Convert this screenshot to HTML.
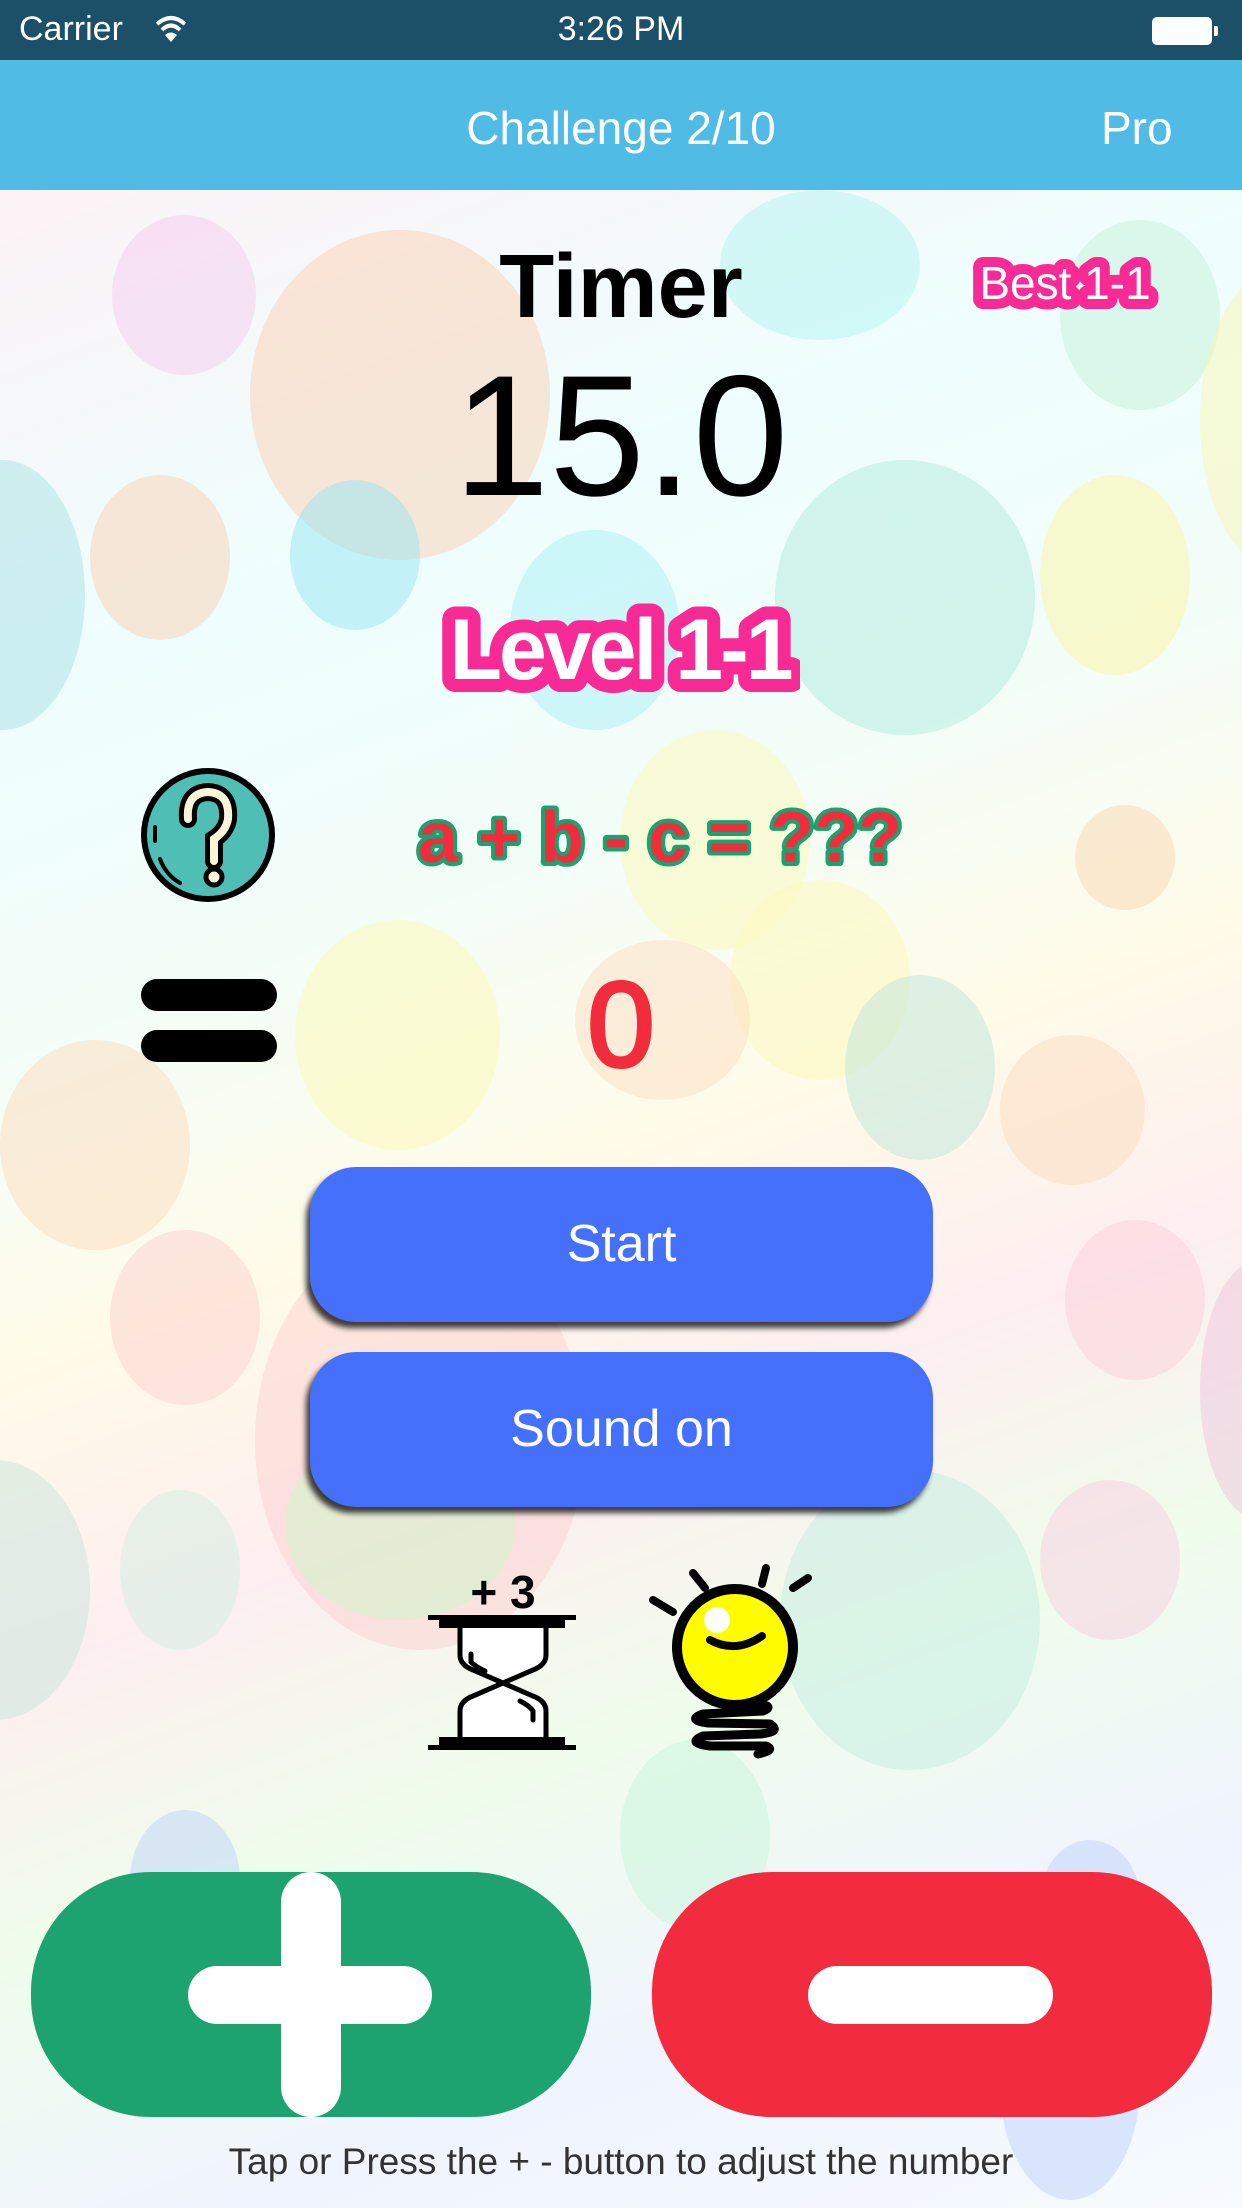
<!DOCTYPE html>
<html><head><meta charset="utf-8"><style>
*{margin:0;padding:0;box-sizing:border-box}
body{width:1242px;height:2208px;position:relative;overflow:hidden;font-family:"Liberation Sans",sans-serif;background:#f6fbfb}
.bg{position:absolute;left:0;top:190px;width:1242px;height:2018px;overflow:hidden;
background:linear-gradient(160deg,#fdf3f6 0%,#eefefe 20%,#f3fdf8 35%,#fffbe8 48%,#fdeef0 60%,#effdec 72%,#f0f4fe 85%,#f6fbff 100%)}
.c{position:absolute;border-radius:50%}
.abs{position:absolute}
.sb{position:absolute;left:0;top:0;width:1242px;height:60px;background:#1b5068;color:#fff;font-size:34px}
.nav{position:absolute;left:0;top:60px;width:1242px;height:130px;background:#50bbe5;color:#fff;font-size:46px}
.btn{position:absolute;left:310px;width:623px;height:155px;background:#4570fb;border-radius:46px;box-shadow:-4px 6px 6px rgba(0,0,0,.75);color:#fff;font-size:52px;text-align:center;line-height:155px}
</style></head><body>
<div class="bg">
<div class="c" style="left:112px;top:25px;width:144px;height:160px;background:rgba(245,200,240,.45)"></div>
<div class="c" style="left:250px;top:40px;width:300px;height:330px;background:rgba(250,205,170,.45)"></div>
<div class="c" style="left:720px;top:0px;width:200px;height:150px;background:rgba(170,245,240,.45)"></div>
<div class="c" style="left:1060px;top:30px;width:160px;height:190px;background:rgba(190,240,210,.45)"></div>
<div class="c" style="left:1200px;top:80px;width:160px;height:300px;background:rgba(250,245,180,.5)"></div>
<div class="c" style="left:-80px;top:270px;width:165px;height:270px;background:rgba(170,225,230,.5)"></div>
<div class="c" style="left:90px;top:285px;width:140px;height:165px;background:rgba(250,205,170,.45)"></div>
<div class="c" style="left:290px;top:290px;width:130px;height:150px;background:rgba(150,230,240,.5)"></div>
<div class="c" style="left:510px;top:340px;width:170px;height:200px;background:rgba(170,240,245,.5)"></div>
<div class="c" style="left:775px;top:270px;width:260px;height:275px;background:rgba(175,235,220,.5)"></div>
<div class="c" style="left:1040px;top:285px;width:150px;height:200px;background:rgba(250,245,170,.55)"></div>
<div class="c" style="left:620px;top:540px;width:190px;height:220px;background:rgba(252,250,190,.55)"></div>
<div class="c" style="left:1075px;top:615px;width:100px;height:105px;background:rgba(250,215,180,.5)"></div>
<div class="c" style="left:730px;top:690px;width:180px;height:200px;background:rgba(252,250,190,.55)"></div>
<div class="c" style="left:295px;top:730px;width:205px;height:230px;background:rgba(252,250,190,.6)"></div>
<div class="c" style="left:575px;top:750px;width:175px;height:160px;background:rgba(252,220,190,.45)"></div>
<div class="c" style="left:845px;top:785px;width:150px;height:185px;background:rgba(190,230,220,.5)"></div>
<div class="c" style="left:0px;top:850px;width:190px;height:210px;background:rgba(252,220,190,.5)"></div>
<div class="c" style="left:1000px;top:845px;width:145px;height:150px;background:rgba(252,220,190,.5)"></div>
<div class="c" style="left:110px;top:1040px;width:150px;height:175px;background:rgba(252,205,205,.45)"></div>
<div class="c" style="left:255px;top:1040px;width:330px;height:420px;background:rgba(252,200,200,.4)"></div>
<div class="c" style="left:1065px;top:1030px;width:140px;height:160px;background:rgba(252,205,215,.45)"></div>
<div class="c" style="left:1200px;top:1070px;width:120px;height:260px;background:rgba(240,190,220,.45)"></div>
<div class="c" style="left:-100px;top:1270px;width:190px;height:260px;background:rgba(200,230,220,.5)"></div>
<div class="c" style="left:120px;top:1300px;width:120px;height:160px;background:rgba(210,240,225,.5)"></div>
<div class="c" style="left:780px;top:1280px;width:260px;height:300px;background:rgba(190,235,225,.45)"></div>
<div class="c" style="left:1040px;top:1290px;width:140px;height:160px;background:rgba(250,205,225,.5)"></div>
<div class="c" style="left:285px;top:1240px;width:230px;height:190px;background:rgba(200,250,200,.45)"></div>
<div class="c" style="left:620px;top:1550px;width:150px;height:190px;background:rgba(200,245,220,.5)"></div>
<div class="c" style="left:130px;top:1620px;width:110px;height:140px;background:rgba(190,210,250,.5)"></div>
<div class="c" style="left:1040px;top:1650px;width:100px;height:120px;background:rgba(190,210,250,.5)"></div>
<div class="c" style="left:1000px;top:1780px;width:140px;height:230px;background:rgba(190,210,250,.5)"></div>
</div>

<div class="sb">
<div class="abs" style="left:19px;top:10px">Carrier</div>
<svg class="abs" style="left:154px;top:14px" width="34" height="30" viewBox="0 0 34 30"><path d="M3 10 Q17 -2 31 10" stroke="#fff" stroke-width="4" fill="none"/><path d="M8 16 Q17 7 26 16" stroke="#fff" stroke-width="4" fill="none"/><path d="M17 28 L11 21 Q17 16 23 21 Z" fill="#fff"/></svg>
<div class="abs" style="left:0;width:1242px;text-align:center;top:10px">3:26 PM</div>
<div class="abs" style="left:1152px;top:17px;width:60px;height:28px;border:2px solid #fff;border-radius:5px;background:#fff"></div>
<div class="abs" style="left:1214px;top:26px;width:4px;height:10px;background:#fff;border-radius:0 2px 2px 0"></div>
</div>
<div class="nav">
<div class="abs" style="left:0;width:1242px;text-align:center;top:41px">Challenge 2/10</div>
<div class="abs" style="left:1101px;top:41px">Pro</div>
</div>

<div class="abs" style="left:0;width:1242px;text-align:center;top:236px;font-size:90px;font-weight:bold;color:#000">Timer</div>
<div class="abs" style="left:0;width:1242px;text-align:center;top:350px;font-size:172px;color:#000;line-height:1">15.0</div>

<svg class="abs" style="left:960px;top:245px" width="210" height="75"><text x="105" y="54" text-anchor="middle" font-family="Liberation Sans" font-size="46" fill="#fff" stroke="#f72a96" stroke-width="20" stroke-linejoin="round" paint-order="stroke">Best 1-1</text></svg>
<svg class="abs" style="left:440px;top:585px" width="360" height="120"><text x="180" y="94" text-anchor="middle" font-family="Liberation Sans" font-weight="bold" font-size="86" letter-spacing="-3" fill="#fff" stroke="#f72a96" stroke-width="26" stroke-linejoin="round" paint-order="stroke">Level 1-1</text></svg>

<svg class="abs" style="left:140px;top:767px" width="136" height="136" viewBox="0 0 136 136"><circle cx="68" cy="68" r="64" fill="#4fbfb5" stroke="#000" stroke-width="6"/><path d="M48 52 Q46 26 68 25 Q90 26 88 52 Q86 64 74 72 L74 94" stroke="#000" stroke-width="18" fill="none" stroke-linecap="round"/><path d="M48 52 Q46 26 68 25 Q90 26 88 52 Q86 64 74 72 L74 94" stroke="#fdf4d8" stroke-width="8" fill="none" stroke-linecap="round"/><circle cx="74" cy="110" r="8" fill="#fdf4d8" stroke="#000" stroke-width="5"/><path d="M15 60 L15 74 M20 92 Q26 108 40 116" stroke="#000" stroke-width="4" fill="none" stroke-linecap="round"/></svg>

<svg class="abs" style="left:400px;top:780px" width="520" height="110"><text x="260" y="82" text-anchor="middle" font-family="Liberation Sans" font-weight="bold" font-size="72" fill="#f02c3d" stroke="#1aa36f" stroke-width="8" stroke-linejoin="round" paint-order="stroke">a + b - c = ???</text></svg>

<div class="abs" style="left:141px;top:979px;width:136px;height:32px;background:#000;border-radius:16px"></div>
<div class="abs" style="left:141px;top:1030px;width:136px;height:32px;background:#000;border-radius:16px"></div>
<div class="abs" style="left:0;width:1242px;text-align:center;top:965px;font-size:120px;color:#f02c3d;line-height:1;-webkit-text-stroke:4px #f02c3d">0</div>

<div class="btn" style="top:1167px">Start</div>
<div class="btn" style="top:1352px">Sound on</div>

<svg class="abs" style="left:428px;top:1570px" width="150" height="185" viewBox="0 0 150 185">
<text x="75" y="38" text-anchor="middle" font-family="Liberation Sans" font-weight="bold" font-size="46" fill="#000">+ 3</text>
<path d="M32 58 L32 85 Q32 95 45 100 L75 113 L45 126 Q32 131 32 141 L32 167 L118 167 L118 141 Q118 131 105 126 L75 113 L105 100 Q118 95 118 85 L118 58 Z" fill="#fff"/>
<path d="M32 58 L32 85 Q32 95 45 100 L105 126 Q118 131 118 141 L118 167 M118 58 L118 85 Q118 95 105 100 L45 126 Q32 131 32 141 L32 167" stroke="#000" stroke-width="5" fill="none"/>
<path d="M43 84 L43 92 Q48 97 57 101 M92 131 Q102 136 105 141 L105 150" stroke="#000" stroke-width="5" fill="none" stroke-linecap="round"/>
<rect x="0" y="45" width="148" height="5" fill="#000"/><rect x="11" y="46" width="126" height="12" fill="#000"/>
<rect x="11" y="167" width="126" height="11" fill="#000"/><rect x="0" y="175" width="148" height="5" fill="#000"/>
</svg>

<svg class="abs" style="left:648px;top:1560px" width="185" height="200" viewBox="0 0 185 200">
<path d="M5 40 L25 52 M45 13 L57 28 M118 8 L114 24 M160 18 L145 28" stroke="#000" stroke-width="8" stroke-linecap="round"/>
<circle cx="87" cy="87" r="58" fill="#fffc00" stroke="#000" stroke-width="10"/>
<circle cx="69" cy="60" r="13" fill="#fff"/>
<path d="M62 80 Q88 94 114 76" stroke="#000" stroke-width="8" fill="none" stroke-linecap="round"/>
<path d="M100 143 Q130 145 115 151 L55 154 Q38 160 60 163 L122 164 Q134 172 112 174 L55 176 Q38 183 62 186 L118 186 Q128 190 110 194" stroke="#000" stroke-width="9" fill="none" stroke-linecap="round" stroke-linejoin="round"/>
</svg>

<div class="abs" style="left:31px;top:1872px;width:560px;height:245px;background:#1ca370;border-radius:120px"></div>
<div class="abs" style="left:188px;top:1966px;width:244px;height:58px;background:#fff;border-radius:29px"></div>
<div class="abs" style="left:281px;top:1872px;width:60px;height:245px;background:#fff;border-radius:30px"></div>
<div class="abs" style="left:652px;top:1872px;width:560px;height:245px;background:#f22c3e;border-radius:120px"></div>
<div class="abs" style="left:808px;top:1966px;width:245px;height:58px;background:#fff;border-radius:29px"></div>

<div class="abs" style="left:0;width:1242px;text-align:center;top:2141px;font-size:37px;color:#333">Tap or Press the + - button to adjust the number</div>
</body></html>
